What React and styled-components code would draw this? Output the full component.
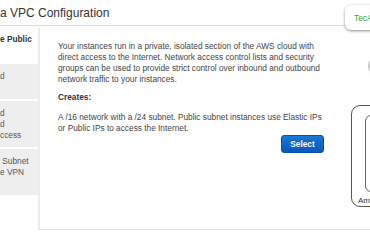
import React from "react";
import styled, { createGlobalStyle } from "styled-components";

const Global = createGlobalStyle`
  html, body { margin: 0; padding: 0; background: #fff; }
  body { font-family: "Liberation Sans", Arial, sans-serif; }
`;

const Page = styled.div`
  position: relative;
  width: 370px;
  height: 250px;
  overflow: hidden;
  background: #fff;
`;

const Header = styled.div`
  box-sizing: border-box;
  height: 26px;
  padding-top: 6px;
  border-bottom: 1px solid #dcdcdc;
`;

const Title = styled.h1`
  margin: 0;
  font-size: 12px;
  line-height: 14px;
  font-weight: normal;
  color: #333;
  white-space: nowrap;
`;

const Body = styled.div`
  display: flex;
  margin-top: 2px;
`;

const Sidebar = styled.div`
  flex: 0 0 38px;
  display: flex;
  flex-direction: column;
  gap: 2px;
`;

const Tab = styled.div`
  padding: ${(p) => (p.$active ? "6px 0 6px" : "7px 0 6px")};
  background: ${(p) => (p.$active ? "#fff" : "#eeeeee")};
  color: ${(p) => (p.$active ? "#333" : "#555")};
  font-weight: ${(p) => (p.$active ? "bold" : "normal")};
  font-size: 8.3px;
  line-height: 11px;
  white-space: pre;
  overflow: hidden;
`;

const TabLine = styled.div`
  height: 11px;
`;

const Panel = styled.div`
  flex: 1;
  display: flex;
  height: 202px;
  box-sizing: border-box;
  border-left: 2px solid #ececec;
  border-bottom: 1px solid #e3e3e3;
`;

const Content = styled.div`
  flex: 0 0 302px;
  box-sizing: border-box;
  padding: 12.5px 18px 0 18px;
  display: flex;
  flex-direction: column;
  font-size: 8.3px;
  line-height: 11.3px;
  color: #444;
`;

const Para = styled.p`
  margin: ${(p) => p.$mt || 0} 0 0;
  white-space: nowrap;
`;

const Heading = styled.div`
  margin-top: 6px;
  font-weight: bold;
  color: #333;
`;

const SelectButton = styled.button`
  align-self: flex-end;
  margin-top: 1px;
  width: 43px;
  height: 18px;
  padding: 0;
  border: 1px solid #0a52a8;
  border-radius: 3px;
  background: linear-gradient(#1b77d6, #0659b8);
  color: #fff;
  font-family: "Liberation Sans", Arial, sans-serif;
  font-size: 8.3px;
  font-weight: bold;
  text-shadow: 0 -1px 0 rgba(0, 0, 0, 0.25);
  cursor: pointer;
`;

const Diagram = styled.div`
  flex: 0 0 200px;
  display: flex;
  flex-direction: column;
  padding-top: 27px;
`;

const Circle = styled.div`
  margin-left: 26px;
  width: 22px;
  height: 22px;
  border-radius: 50%;
  background: radial-gradient(circle at 60% 50%, #e4e4e4 0%, #d2d2d2 55%, #b9b9b9 100%);
`;

const Cloud = styled.div`
  margin-left: 9px;
  margin-top: 28px;
  width: 160px;
  height: 102px;
  box-sizing: border-box;
  border: 1px solid #555;
  border-radius: 9px;
  padding: 9px 0 0 6px;
  display: flex;
  flex-direction: column;
`;

const Inner = styled.div`
  margin-left: 7px;
  flex: 0 0 77px;
  box-sizing: border-box;
  border: 1px solid #666;
  border-radius: 6px;
`;

const CloudLabel = styled.div`
  margin-top: 4px;
  font-size: 8px;
  line-height: 9px;
  color: #333;
  white-space: nowrap;
`;

const Badge = styled.div`
  position: absolute;
  left: 345px;
  top: 5px;
  width: 80px;
  height: 25px;
  box-sizing: border-box;
  padding-left: 9px;
  display: flex;
  align-items: center;
  background: #fff;
  border-radius: 6px;
  box-shadow: 0 1px 3px rgba(0, 0, 0, 0.45);
  color: #2fa52f;
  font-size: 8.3px;
  white-space: nowrap;
`;

const tabs = [
  { active: true, lines: ["e Public", " "] },
  { lines: ["d", " "] },
  { lines: ["d", "d", "ccess"] },
  { lines: [" Subnet", "e VPN", " "] },
];

export default function App() {
  return (
    <Page>
      <Global />
      <Header>
        <Title>a VPC Configuration</Title>
      </Header>
      <Body>
        <Sidebar>
          {tabs.map((t, i) => (
            <Tab key={i} $active={t.active}>
              {t.lines.map((l, j) => (
                <TabLine key={j}>{l}</TabLine>
              ))}
            </Tab>
          ))}
        </Sidebar>
        <Panel>
          <Content>
            <Para>
              Your instances run in a private, isolated section of the AWS cloud with
              <br />
              direct access to the Internet. Network access control lists and security
              <br />
              groups can be used to provide strict control over inbound and outbound
              <br />
              network traffic to your instances.
            </Para>
            <Heading>Creates:</Heading>
            <Para $mt="8.7px">
              A /16 network with a /24 subnet. Public subnet instances use Elastic IPs
              <br />
              or Public IPs to access the Internet.
            </Para>
            <SelectButton>Select</SelectButton>
          </Content>
          <Diagram>
            <Circle />
            <Cloud>
              <Inner />
              <CloudLabel>Amazon Virtual Private Cloud</CloudLabel>
            </Cloud>
          </Diagram>
        </Panel>
      </Body>
      <Badge>TecAdmin</Badge>
    </Page>
  );
}
